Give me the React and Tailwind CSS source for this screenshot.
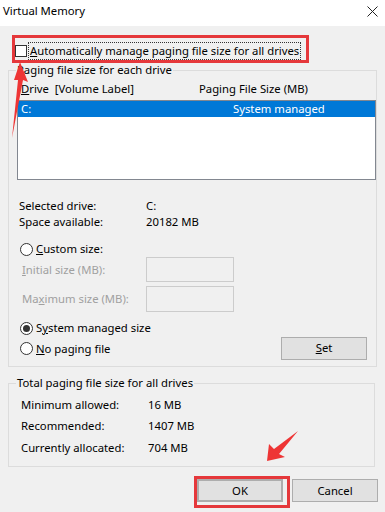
import React from "react";

function Radio({ checked }) {
  return (
    <span className="w-[13px] h-[13px] rounded-full border border-[#333] bg-white flex items-center justify-center shrink-0">
      {checked && <span className="w-[7px] h-[7px] rounded-full bg-[#333]" />}
    </span>
  );
}

function Btn({ children, className = "" }) {
  return (
    <div className={`h-[23px] w-[86px] bg-[#e1e1e1] border border-[#adadad] flex items-center justify-center ${className}`}>
      {children}
    </div>
  );
}

export default function App() {
  return (
    <div className="relative w-[385px] h-[512px] bg-[#f0f0f0] overflow-hidden text-[11.3px] leading-4 text-black font-['Noto_Sans','Open_Sans',sans-serif]">
      {/* title bar */}
      <div className="h-[26px] bg-white flex items-center justify-between pl-[3px] pr-[7px] pb-[4px]">
        <span className="text-[11.3px]">Virtual Memory</span>
        <svg width="11" height="11" viewBox="0 0 11 11" stroke="#222" strokeWidth="1">
          <path d="M0.5 0.5 L10.5 10.5 M10.5 0.5 L0.5 10.5" />
        </svg>
      </div>

      {/* auto manage */}
      <div className="mt-[16px] ml-[15px] flex items-center h-[17px]">
        <span className="w-[12px] h-[12px] border border-[#333] bg-white shrink-0" />
        <span className="ml-[1px] px-[1px] border border-dotted border-[#333] whitespace-nowrap">
          <u>A</u>utomatically manage paging file size for all drives
        </span>
      </div>

      {/* paging file size group */}
      <fieldset className="mt-[3px] ml-[8px] w-[367px] h-[305px] border border-[#dcdcdc]">
        <legend className="ml-[7px] px-[1px]">
          <u>P</u>aging file size for each drive
        </legend>
        <div className="mt-[3px] h-4 flex pl-[12px]">
          <span className="w-[178px]"><u>D</u>rive&nbsp; [Volume Label]</span>
          <span>Paging File Size (MB)</span>
        </div>
        <div className="mt-[3px] ml-[8px] w-[359px] h-[80px] bg-white border border-[#828790]">
          <div className="h-[16px] bg-[#0078d7] text-white flex">
            <span className="pl-[3px] w-[215px]">C:</span>
            <span>System managed</span>
          </div>
        </div>

        <div className="mt-[18px] pl-[10px] flex">
          <span className="w-[127px]">Selected drive:</span>
          <span>C:</span>
        </div>
        <div className="pl-[10px] flex">
          <span className="w-[127px]">Space available:</span>
          <span>20182 MB</span>
        </div>

        <div className="mt-[11px] pl-[11px] flex items-center gap-[3px] h-4">
          <Radio />
          <span><u>C</u>ustom size:</span>
        </div>
        <div className="pl-[13px] flex items-center h-[25px] text-[#a0a0a0]">
          <span className="w-[124px]"><u>I</u>nitial size (MB):</span>
          <span className="w-[88px] h-[25px] border border-[#cccccc] bg-[#f0f0f0]" />
        </div>
        <div className="mt-[4px] pl-[13px] flex items-center h-[26px] text-[#a0a0a0]">
          <span className="w-[124px]">Ma<u>x</u>imum size (MB):</span>
          <span className="w-[88px] h-[26px] border border-[#cccccc] bg-[#f0f0f0]" />
        </div>

        <div className="mt-[8px] pl-[11px] flex items-center gap-[3px] h-4">
          <Radio checked />
          <span>S<u>y</u>stem managed size</span>
        </div>
        <div className="pl-[11px] flex items-center h-[24px]">
          <Radio />
          <span className="ml-[3px] mt-[2px]"><u>N</u>o paging file</span>
          <Btn className="ml-auto mr-[9px]"><u>S</u>et</Btn>
        </div>
      </fieldset>

      {/* total group */}
      <fieldset className="mt-[8px] ml-[8px] w-[367px] h-[92px] border border-[#dcdcdc]">
        <legend className="ml-[7px] px-[1px]">Total paging file size for all drives</legend>
        <div className="mt-[6px] pl-[12px] flex flex-col gap-[5px]">
          <div className="flex">
            <span className="w-[127px]">Minimum allowed:</span>
            <span>16 MB</span>
          </div>
          <div className="flex">
            <span className="w-[127px]">Recommended:</span>
            <span>1407 MB</span>
          </div>
          <div className="flex mt-[1px]">
            <span className="w-[127px]">Currently allocated:</span>
            <span>704 MB</span>
          </div>
        </div>
      </fieldset>

      {/* buttons */}
      <div className="mt-[12px] flex justify-end gap-[9px] pr-[7px]">
        <Btn className="border-[#0078d7] border-2">OK</Btn>
        <Btn>Cancel</Btn>
      </div>

      {/* annotations */}
      <div className="absolute left-[12px] top-[35px] w-[297px] h-[28px] border-[3px] border-[#e5383b]" />
      <div className="absolute left-[194px] top-[476px] w-[96px] h-[32px] border-[3px] border-[#e5383b]" />
      <svg className="absolute left-0 top-0" width="385" height="512">
        <polygon points="20,62 28,82 23,80 12,138 18,80 14,80" fill="#ee3535" />
        <polygon points="267,461 269,444 274,449 298,431 279,454 285,457" fill="#ee3535" />
      </svg>
    </div>
  );
}
